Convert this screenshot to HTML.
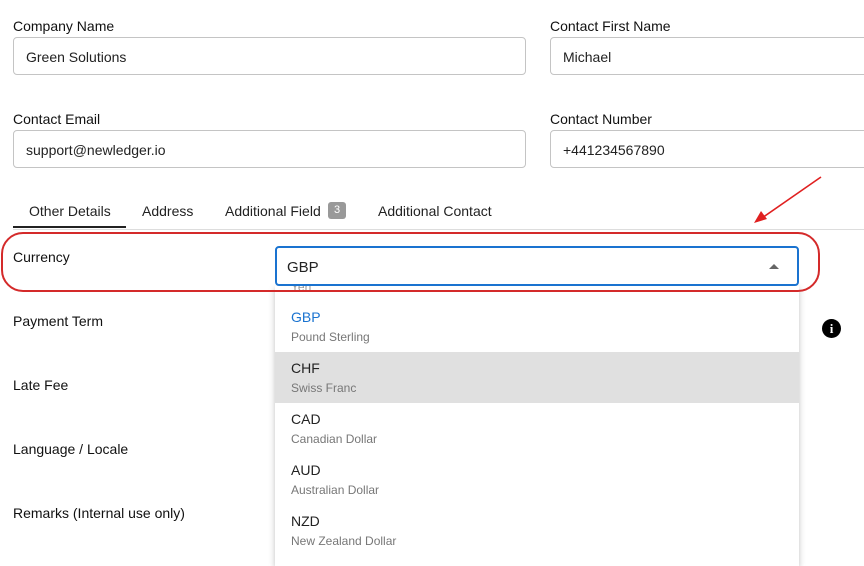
<!DOCTYPE html>
<html><head><style>
body{margin:0;width:864px;height:561px;overflow:hidden;background:#fff;font-family:"Liberation Sans",sans-serif;color:#222;position:relative}
.a{position:absolute}
.lbl{font-size:14px;color:#111}
.inp{position:absolute;height:38px;border:1px solid #c4c4c4;border-radius:4px;box-sizing:border-box;font-size:14px;padding:11px 12px;color:#222}
.tab{position:absolute;top:203px;font-size:14px;color:#222}
.item{position:absolute;left:275px;width:524px;height:51px;box-sizing:border-box;padding:8px 16px 0}
.item .c{font-size:14px;color:#222}
.item .n{font-size:12px;color:#777;margin-top:5px}
</style></head><body>
<div class="a lbl" style="left:13px;top:18px">Company Name</div>
<div class="inp" style="left:13px;top:37px;width:513px">Green Solutions</div>
<div class="a lbl" style="left:550px;top:18px">Contact First Name</div>
<div class="inp" style="left:550px;top:37px;width:330px">Michael</div>
<div class="a lbl" style="left:13px;top:111px">Contact Email</div>
<div class="inp" style="left:13px;top:130px;width:513px">support@newledger.io</div>
<div class="a lbl" style="left:550px;top:111px">Contact Number</div>
<div class="inp" style="left:550px;top:130px;width:330px">+441234567890</div>

<div class="tab" style="left:29px">Other Details</div>
<div class="tab" style="left:142px">Address</div>
<div class="tab" style="left:225px">Additional Field</div>
<div class="a" style="left:328px;top:202px;width:18px;height:17px;background:#999;color:#fff;font-size:11px;border-radius:3px;text-align:center;line-height:17px">3</div>
<div class="tab" style="left:378px">Additional Contact</div>
<div class="a" style="left:13px;top:229px;width:851px;height:1px;background:#ddd"></div>
<div class="a" style="left:13px;top:226px;width:113px;height:2px;background:#222"></div>

<div class="a lbl" style="left:13px;top:249px">Currency</div>
<div class="a lbl" style="left:13px;top:313px">Payment Term</div>
<div class="a lbl" style="left:13px;top:377px">Late Fee</div>
<div class="a lbl" style="left:13px;top:441px">Language / Locale</div>
<div class="a lbl" style="left:13px;top:505px">Remarks (Internal use only)</div>

<div class="a" style="left:822px;top:319px;width:19px;height:19px;border-radius:50%;background:#000;color:#fff;font-weight:bold;font-size:13px;text-align:center;line-height:19px;font-family:'Liberation Serif',serif">i</div>

<div class="a" style="left:275px;top:286px;width:524px;height:280px;background:#fff;box-shadow:0 2px 6px rgba(0,0,0,.25)"></div>
<div class="a" style="left:291px;top:280px;font-size:12px;color:#999;height:12px;overflow:hidden">Yen</div>
<div class="item" style="top:301px"><div class="c" style="color:#1a73d0">GBP</div><div class="n">Pound Sterling</div></div>
<div class="item" style="top:352px;background:#e0e0e0"><div class="c">CHF</div><div class="n">Swiss Franc</div></div>
<div class="item" style="top:403px"><div class="c">CAD</div><div class="n">Canadian Dollar</div></div>
<div class="item" style="top:454px"><div class="c">AUD</div><div class="n">Australian Dollar</div></div>
<div class="item" style="top:505px"><div class="c">NZD</div><div class="n">New Zealand Dollar</div></div>

<div class="a" style="left:275px;top:246px;width:524px;height:40px;border:2px solid #1a73d0;border-radius:4px;box-sizing:border-box;background:#fff;font-size:15px;padding:11px 10px">GBP
<div class="a" style="right:18px;top:16px;width:0;height:0;border-left:5px solid transparent;border-right:5px solid transparent;border-bottom:5px solid #666"></div></div>

<div class="a" style="left:1px;top:232px;width:819px;height:60px;border:2px solid #d42a2a;border-radius:22px;box-sizing:border-box"></div>
<svg class="a" style="left:740px;top:170px" width="90" height="60"><line x1="81" y1="7" x2="22" y2="48" stroke="#e02020" stroke-width="1.6"/><polygon points="14,53 21,41 27,49" fill="#e02020"/></svg>
</body></html>
